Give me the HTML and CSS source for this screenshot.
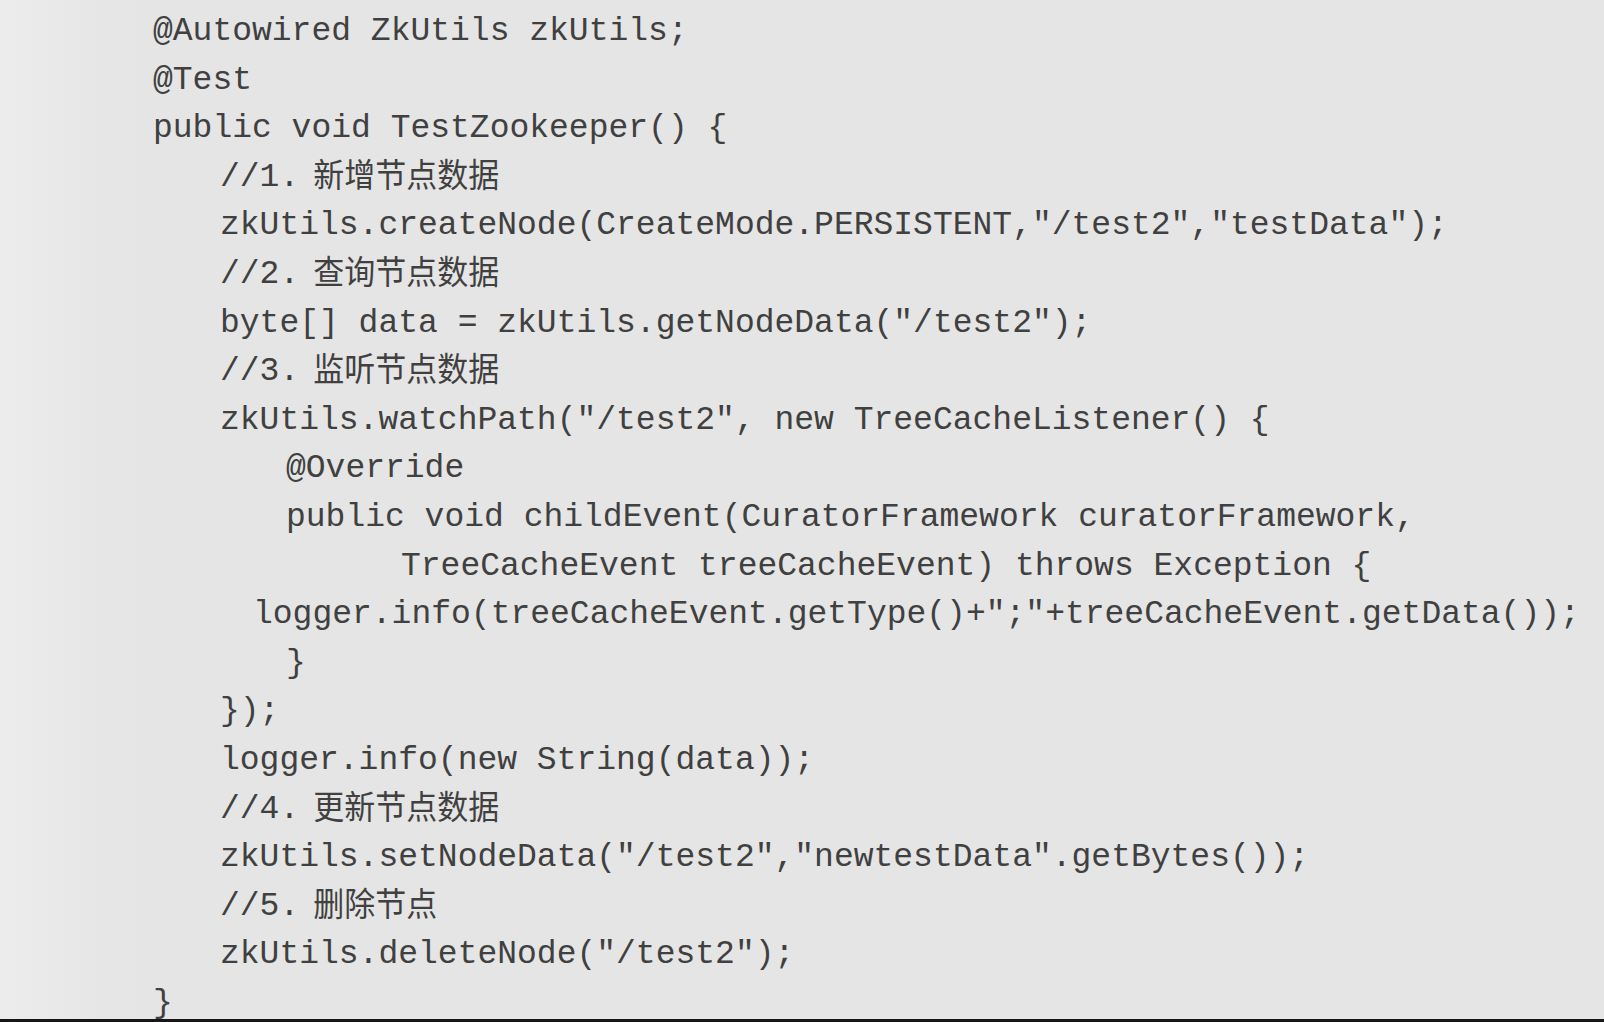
FILE: index.html
```html
<!DOCTYPE html>
<html lang="zh-CN">
<head>
<meta charset="utf-8">
<title>TestZookeeper</title>
<link rel="stylesheet" href="styles.css">
</head>
<body>
<div class="page">
  <pre class="code"><div class="ln i0">@Autowired ZkUtils zkUtils;</div><div class="ln i0">@Test</div><div class="ln i0">public void TestZookeeper() {</div><div class="ln i1">//1.<span class="cn">新增节点数据</span></div><div class="ln i1">zkUtils.createNode(CreateMode.PERSISTENT,"/test2","testData");</div><div class="ln i1">//2.<span class="cn">查询节点数据</span></div><div class="ln i1">byte[] data = zkUtils.getNodeData("/test2");</div><div class="ln i1">//3.<span class="cn">监听节点数据</span></div><div class="ln i1">zkUtils.watchPath("/test2", new TreeCacheListener() {</div><div class="ln i2">@Override</div><div class="ln i2">public void childEvent(CuratorFramework curatorFramework,</div><div class="ln i3">TreeCacheEvent treeCacheEvent) throws Exception {</div><div class="ln il">logger.info(treeCacheEvent.getType()+";"+treeCacheEvent.getData());</div><div class="ln i2">}</div><div class="ln i1">});</div><div class="ln i1">logger.info(new String(data));</div><div class="ln i1">//4.<span class="cn">更新节点数据</span></div><div class="ln i1">zkUtils.setNodeData("/test2","newtestData".getBytes());</div><div class="ln i1">//5.<span class="cn">删除节点</span></div><div class="ln i1">zkUtils.deleteNode("/test2");</div><div class="ln i0">}</div></pre>
</div>
</body>
</html>
```

FILE: styles.css
```css
html, body {
  margin: 0;
  padding: 0;
  background: #e5e5e5;
}

.page {
  width: 1604px;
  height: 1022px;
  box-sizing: border-box;
  background: linear-gradient(to right, #ececec 0px, #e7e7e7 90px, #e5e5e5 140px);
  border-bottom: 3px solid #161616;
  overflow: hidden;
}

.code {
  margin: 0;
  padding: 8px 0 0 0;
  font-family: "Courier New", "Nimbus Mono PS", "FreeMono", "Liberation Mono", monospace;
  font-size: 33px;
  line-height: 48.6px;
  color: #404040;
  white-space: pre;
}

.ln {
  height: 48.6px;
}

.i0 { padding-left: 153px; }
.i1 { padding-left: 220px; }
.i2 { padding-left: 286px; }
.i3 { padding-left: 401px; }
.il { padding-left: 253px; }

.cn {
  font-family: "Noto Sans CJK SC", sans-serif;
  font-size: 31px;
  line-height: 1;
  margin-left: 14px;
  display: inline-block;
  vertical-align: baseline;
  transform: scaleY(1.08);
}
```
